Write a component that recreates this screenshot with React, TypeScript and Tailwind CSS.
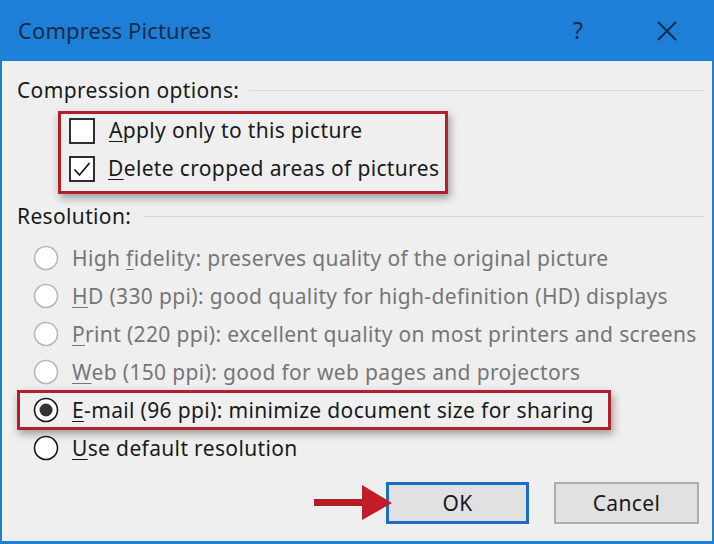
import React from "react";

const font = { fontFamily: '"Noto Sans", "Open Sans", sans-serif' };

function U({ c }: { c: string }) {
  return <span className="underline decoration-1 underline-offset-[3px]">{c}</span>;
}

function Radio({ checked, disabled }: { checked?: boolean; disabled?: boolean }) {
  return (
    <svg width="26" height="26" viewBox="0 0 26 26" className="shrink-0">
      <circle cx="13" cy="13" r="11.5" fill="#fff" stroke={disabled ? "#b9b9b9" : "#1a1a1a"} strokeWidth="1.6" />
      {checked && <circle cx="13" cy="13" r="6.5" fill="#333" />}
    </svg>
  );
}

function Check({ checked }: { checked?: boolean }) {
  return (
    <svg width="26" height="26" viewBox="0 0 26 26" className="shrink-0">
      <rect x="1" y="1" width="24" height="24" fill="#fff" stroke="#1a1a1a" strokeWidth="1.8" />
      {checked && <path d="M5.5 13.5 L10.5 19 L20.5 7" fill="none" stroke="#1a1a1a" strokeWidth="1.8" />}
    </svg>
  );
}

export default function App() {
  const rows: { pre: string; u: string; post: string; disabled?: boolean; checked?: boolean; boxed?: boolean }[] = [
    { pre: "High ", u: "f", post: "idelity: preserves quality of the original picture", disabled: true },
    { pre: "", u: "H", post: "D (330 ppi): good quality for high-definition (HD) displays", disabled: true },
    { pre: "", u: "P", post: "rint (220 ppi): excellent quality on most printers and screens", disabled: true },
    { pre: "", u: "W", post: "eb (150 ppi): good for web pages and projectors", disabled: true },
    { pre: "", u: "E", post: "-mail (96 ppi): minimize document size for sharing", checked: true, boxed: true },
    { pre: "", u: "U", post: "se default resolution" },
  ];
  return (
    <div className="w-[714px] h-[544px] bg-[#1d80d6] flex flex-col overflow-hidden" style={font}>
      <div className="h-[61px] flex items-center pl-[18px] pr-[36px] text-[#172c4a] shrink-0">
        <div className="text-[22px] tracking-[0.1px] flex-1 pb-[1px]">Compress Pictures</div>
        <div className="text-[23px] w-[20px] text-center mr-[68px]">?</div>
        <svg width="22" height="22" viewBox="0 0 22 22">
          <path d="M2 2 L20 20 M20 2 L2 20" stroke="#172c4a" strokeWidth="2" />
        </svg>
      </div>
      <div className="flex-1 ml-[2px] mr-[2px] mb-[3px] bg-[#efefef] flex flex-col text-[#1a1a1a] text-[21px] tracking-[0.35px] leading-none">
        <div className="h-[28px] mt-[15px] flex items-center pl-[15px]">
          <span>Compression options:</span>
          <div className="flex-1 h-px bg-[#d8d8d8] ml-[10px] mr-[8px]" />
        </div>
        <div className="mt-[7px] ml-[56px] w-[390px] h-[83px] border-[3px] border-[#b3202a] shadow-[2px_4px_8px_rgba(0,0,0,0.35)] flex flex-col justify-center gap-[12px] pl-[8px] pb-[6px]">
          <div className="flex items-center gap-[14px] h-[26px]">
            <Check />
            <span><U c="A" />pply only to this picture</span>
          </div>
          <div className="flex items-center gap-[13px] h-[26px]">
            <Check checked />
            <span><U c="D" />elete cropped areas of pictures</span>
          </div>
        </div>
        <div className="h-[28px] mt-[8px] flex items-center pl-[15px]">
          <span>Resolution:</span>
          <div className="flex-1 h-px bg-[#d8d8d8] ml-[12px] mr-[8px]" />
        </div>
        <div className="mt-[9px] flex flex-col">
          {rows.map((r, i) =>
            r.boxed ? (
              <div key={i} className="h-[40px] -my-px ml-[15px] w-[594px] border-[3px] border-[#b3202a] shadow-[2px_4px_8px_rgba(0,0,0,0.35)] flex items-center gap-[13px] pl-[13px]">
                <Radio checked />
                <span>{r.pre}<U c={r.u} />{r.post}</span>
              </div>
            ) : (
              <div key={i} className={`h-[38px] flex items-center gap-[13px] pl-[31px] ${r.disabled ? "text-[#767676]" : ""}`}>
                <Radio disabled={r.disabled} />
                <span>{r.pre}<U c={r.u} />{r.post}</span>
              </div>
            )
          )}
        </div>
        <div className="mt-[15px] flex items-center justify-end pr-[13px]">
          <svg width="80" height="40" viewBox="0 0 80 40" className="mr-[-6px] relative z-10">
            <rect x="2" y="16" width="52" height="7" fill="#b71c25" />
            <path d="M50 2 L80 20 L50 37 Z" fill="#c21d27" />
          </svg>
          <div className="w-[143px] h-[42px] border-[3px] border-[#1a6fc4] bg-[#e1e1e1] flex items-center justify-center">OK</div>
          <div className="w-[145px] h-[42px] ml-[25px] border-2 border-[#adadad] bg-[#e1e1e1] flex items-center justify-center">Cancel</div>
        </div>
      </div>
    </div>
  );
}
